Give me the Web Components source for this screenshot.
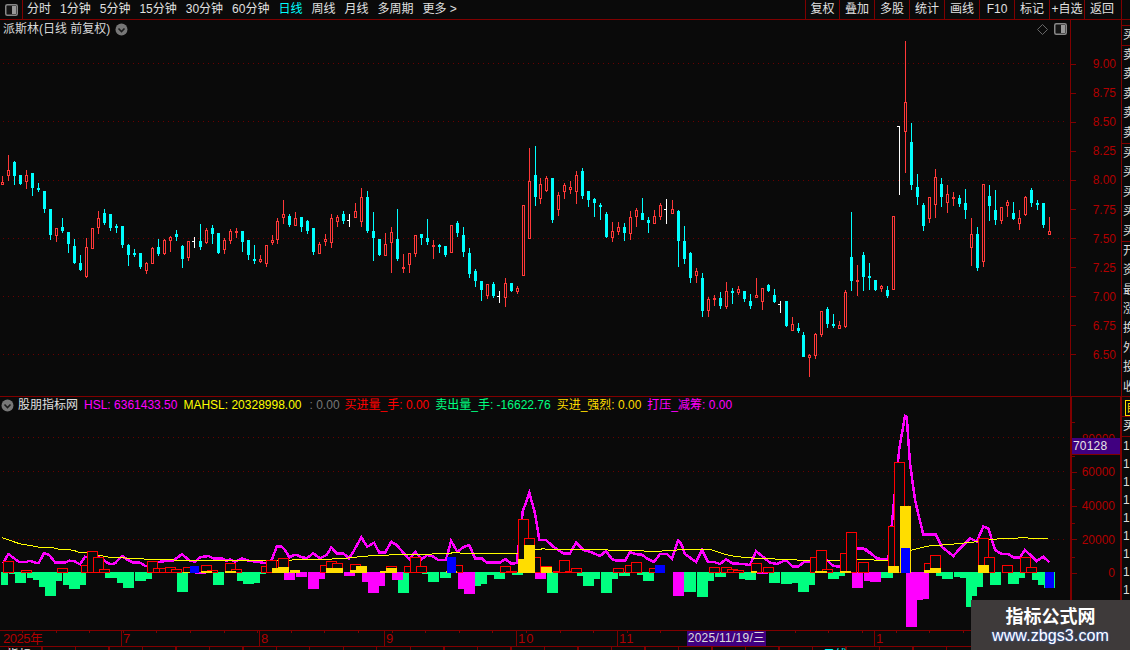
<!DOCTYPE html>
<html lang="zh">
<head>
<meta charset="utf-8">
<title>派斯林</title>
<style>
  html, body { margin: 0; padding: 0; background: #0a0a0a; overflow: hidden; }
</style>
</head>
<body>
<stock-terminal>
  <stock-toolbar style="grid-area: 1 / 1 / 2 / 4"></stock-toolbar>
  <price-panel style="grid-area: 2 / 1 / 3 / 2"></price-panel>
  <axis-scale style="grid-area: 2 / 2 / 3 / 3" labels="9.00,8.75,8.50,8.25,8.00,7.75,7.50,7.25,7.00,6.75,6.50" row="29.1" start="29.5" line="1"></axis-scale>
  <side-list style="grid-area: 2 / 3 / 3 / 4" top="5" rowh="19.4" sections="买|卖,卖,卖,卖,卖|买,买,买,买,买|开,资,最,涨,换,外,投,收"></side-list>
  <volume-panel style="grid-area: 3 / 1 / 4 / 2"></volume-panel>
  <axis-scale style="grid-area: 3 / 2 / 4 / 3" labels="80000,60000,40000,20000,0" row="33.7" start="24.85" line="2" minor>
    <cross-label>70128</cross-label>
  </axis-scale>
  <quote-column style="grid-area: 3 / 3 / 4 / 4"></quote-column>
  <time-axis style="grid-area: 4 / 1 / 5 / 4"></time-axis>
  <tab-strip style="grid-area: 5 / 1 / 6 / 4"></tab-strip>
  <site-mark>
    <span slot="name">指标公式网</span>
    <span slot="url">www.zbgs3.com</span>
  </site-mark>
</stock-terminal>

<script>
const LINE = '#800000';
const BG = '#0a0a0a';
const FONT = '"Liberation Sans", "Noto Sans CJK SC", sans-serif';

const chevronDot = `<svg width="13" height="13" viewBox="0 0 13 13"><circle cx="6.5" cy="6.5" r="6" fill="#777"/><path d="M3.5 5.5 L6.5 8.5 L9.5 5.5" fill="none" stroke="#1c1c1c" stroke-width="1.6"/></svg>`;
const panelIcon = `<svg width="13" height="12" viewBox="0 0 13 12"><rect x="0.75" y="0.75" width="11.5" height="10.5" rx="1.5" fill="#151515" stroke="#888" stroke-width="1.5"/><rect x="7" y="2" width="4" height="8" fill="#999"/></svg>`;

function dotted(ys) {
  return ys.map(y => `<line x1="3" x2="1068" y1="${y + 0.5}" y2="${y + 0.5}" stroke="#6a0000" stroke-width="1" stroke-dasharray="1 4"/>`).join('');
}

class StockTerminal extends HTMLElement {
  constructor() {
    super();
    this.attachShadow({ mode: 'open' });
    this.shadowRoot.innerHTML = `
      <style>
        :host { display: block; width: 1130px; height: 650px; position: relative; overflow: hidden;
          background: ${BG}; color: #ddd; font: 12px/16px ${FONT}; }
        .grid { display: grid; width: 100%; height: 100%;
          grid-template-columns: 1070px 51px 9px;
          grid-template-rows: 20px 376px 234px 17px 3px; }
      </style>
      <div class="grid"><slot></slot></div>`;
  }
}

class StockToolbar extends HTMLElement {
  constructor() {
    super();
    this.attachShadow({ mode: 'open' });
  }
  connectedCallback() {
    const periods = ['分时', '1分钟', '5分钟', '15分钟', '30分钟', '60分钟', '日线', '周线', '月线', '多周期', '更多 >'];
    const actions = ['复权', '叠加', '多股', '统计', '画线', 'F10', '标记', '+自选', '返回'];
    this.shadowRoot.innerHTML = `
      <style>
        :host { display: flex; height: 20px; box-sizing: border-box; border-bottom: 1px solid ${LINE};
          align-items: stretch; padding-right: 8px; line-height: 19px; color: #e0e0e0; }
        .switch { width: 23px; box-sizing: border-box; border-right: 1px solid ${LINE};
          display: flex; align-items: center; justify-content: center; padding-left: 1px; }
        svg { display: block; }
        .periods { display: flex; gap: 9px; padding-left: 4px; white-space: pre; }
        .on { color: #00ffff; }
        .actions { display: flex; margin-left: auto; }
        .actions span { width: 35px; box-sizing: border-box; border-left: 1px solid ${LINE}; text-align: center; white-space: nowrap; }
        .actions span:first-child { width: 34px; }
        .actions span:last-child { width: 38px; border-right: 1px solid ${LINE}; padding-right: 2px; }
      </style>
      <div class="switch">${panelIcon}</div>
      <div class="periods">${periods.map(p => `<span class="${p === '日线' ? 'on' : ''}">${p}</span>`).join('')}</div>
      <div class="actions">${actions.map(a => `<span>${a}</span>`).join('')}</div>`;
  }
}

// candles read off the chart: x, high, low, body top, body bottom, kind
const CANDLE_BLOCKS = [
  { ox: 0, oy: 150, rows: [
    [7,78,105,97,105,'r'],[25,15,93,60,78,'r'],[43,33,105,36,78,'c'],[61,75,105,75,102,'c'],[79,60,117,76,96,'r'],
    [97,69,138,69,114,'c'],[115,99,126,114,120,'c'],[133,123,189,123,177,'c'],[151,177,270,177,255,'c'],[169,234,276,234,258,'r'],
    [187,204,249,231,243,'c'],[205,246,309,246,282,'c'],[223,267,342,288,339,'c'],[241,315,363,339,360,'c'],[259,264,384,291,381,'r'],
    [277,234,297,234,297,'r'],[295,183,252,204,234,'r'],[313,177,225,189,219,'c'],[331,192,243,192,234,'c'],[349,222,249,228,234,'c'],
    [367,228,294,228,285,'c'],[385,282,348,285,315,'c'],[403,297,321,309,315,'c'],[421,309,357,309,351,'c'],[439,336,372,339,363,'r'],
    [457,291,342,294,342,'r'],[475,267,318,291,312,'c'],[493,267,315,270,312,'r'],[511,258,306,261,273,'r'],[529,240,273,252,261,'c'],
    [547,285,354,288,327,'c'],[565,273,333,273,324,'r'],[583,261,294,273,273,'w'],[601,222,300,273,291,'c'],[619,234,282,240,279,'r'],
    [637,225,282,234,252,'c'],[655,249,312,249,309,'c'],[673,264,312,270,300,'r'],[691,237,282,243,273,'r'],[709,234,264,243,249,'r'],
    [727,243,306,243,276,'c'],[745,270,330,270,315,'c'],[763,285,342,327,333,'c'],[781,315,339,327,336,'r'],[799,285,351,285,342,'r'],
    [817,255,285,270,279,'r'],[832,204,282,213,270,'r'],[850,150,222,192,204,'r'],[868,192,231,198,225,'c'],[886,186,228,204,228,'r']
  ]},
  { ox: 300, oy: 140, rows: [
    [4,231,276,231,261,'c'],[22,240,282,243,273,'c'],[40,264,345,264,336,'c'],[58,306,342,312,342,'r'],[76,282,318,297,306,'r'],
    [94,222,324,234,309,'r'],[112,225,261,231,246,'r'],[130,213,252,222,243,'c'],[148,222,261,240,240,'w'],[166,189,234,213,234,'r'],
    [184,144,261,171,246,'r'],[202,153,279,171,273,'c'],[220,216,363,273,294,'c'],[238,297,348,297,345,'c'],[256,279,348,312,348,'r'],
    [274,261,399,276,309,'r'],[292,207,363,297,357,'c'],[310,342,399,381,387,'r'],[328,339,399,339,375,'r'],[346,285,351,285,342,'r'],
    [364,282,315,282,294,'c'],[382,237,315,294,306,'c'],[400,300,357,315,321,'r'],[418,312,339,315,321,'c'],[436,318,351,318,345,'c'],
    [454,255,339,255,339,'r'],[472,243,291,249,279,'c'],[490,261,351,285,336,'c'],[508,324,414,339,402,'c'],[526,387,441,393,423,'c'],
    [544,423,483,423,450,'c'],[562,432,477,432,468,'r'],[580,426,474,432,468,'c'],[598,453,489,468,468,'w'],[616,414,501,429,474,'r'],
    [634,429,456,429,453,'c'],[652,438,462,444,456,'r'],[670,195,407,195,407,'r'],[688,24,297,123,297,'r'],[706,18,198,105,171,'c'],
    [722,114,192,132,177,'r'],[739,108,156,114,153,'r'],[757,114,249,114,240,'c'],[775,156,228,165,210,'r'],[793,129,177,135,156,'r'],
    [811,123,162,141,150,'r'],[829,93,192,105,156,'r'],[847,84,177,93,168,'c'],[865,153,201,153,180,'c'],[883,174,231,177,189,'c']
  ]},
  { ox: 600, oy: 190, rows: [
    [1,39,90,45,48,'c'],[19,66,144,72,141,'c'],[37,96,156,123,144,'r'],[55,96,135,111,126,'r'],[73,99,153,111,129,'c'],
    [91,63,150,81,132,'r'],[109,54,111,60,81,'r'],[127,24,90,69,90,'c'],[145,81,129,90,99,'c'],[163,60,102,78,102,'r'],
    [181,39,90,45,81,'r'],[199,27,102,58,58,'w'],[217,30,72,57,72,'r'],[235,60,231,63,153,'c'],[253,108,222,153,207,'c'],
    [271,186,279,189,264,'c'],[289,234,279,243,258,'r'],[307,249,381,264,363,'c'],[325,321,381,327,363,'r'],[343,315,348,324,330,'r'],
    [361,306,357,324,348,'c'],[379,276,357,303,351,'r'],[397,294,342,303,306,'c'],[415,288,315,297,309,'r'],[433,303,336,303,327,'c'],
    [451,312,357,333,348,'c'],[469,264,324,315,324,'r'],[487,294,360,294,336,'r'],[505,282,306,285,303,'c'],[523,297,339,315,336,'c'],
    [541,333,369,343,343,'w'],[559,333,411,333,408,'c'],[577,381,423,402,423,'r'],[595,399,429,414,423,'c'],[610,426,501,435,501,'c'],
    [628,492,561,495,504,'r'],[646,429,507,432,498,'r'],[664,363,441,363,435,'r'],[682,351,414,357,402,'c'],[700,372,414,402,405,'c'],
    [718,393,417,405,417,'r'],[736,300,414,306,411,'r'],[754,66,303,201,273,'c'],[772,225,318,270,276,'r'],[790,186,303,195,261,'c'],
    [808,219,300,258,264,'c'],[826,270,303,270,300,'c']
  ]},
  { ox: 870, oy: 270, rows: [[35,45,66,48,57,'r'],[52,48,84,60,78,'c']] },
  { ox: 890, oy: 216, rows: [[10,0,222,0,222,'r']] },
  { ox: 830, oy: 30, rows: [
    [208,288,495,288,288,'w'],[226,33,429,216,305,'r'],[244,279,480,336,465,'c'],[262,432,525,471,501,'c'],[280,519,603,525,588,'c'],
    [298,501,579,501,567,'r'],[316,417,564,441,525,'r'],[334,444,531,462,501,'c'],[352,465,549,492,519,'r'],[370,486,528,501,507,'r'],
    [388,495,531,504,522,'c'],[406,477,567,519,540,'c'],[424,564,708,612,654,'r'],[442,591,723,612,714,'c'],[460,462,711,462,696,'r'],
    [478,465,573,498,528,'c'],[496,480,585,540,570,'c'],[514,531,582,531,573,'r'],[532,510,561,516,528,'r'],[550,516,570,549,567,'c'],
    [568,540,600,564,582,'r'],[586,498,558,501,555,'r'],[604,474,531,480,519,'c'],[622,510,540,519,525,'c'],[640,519,594,519,585,'c'],
    [658,561,615,603,615,'r']
  ]}
];

class PricePanel extends HTMLElement {
  constructor() {
    super();
    this.attachShadow({ mode: 'open' });
  }
  connectedCallback() {
    this.shadowRoot.innerHTML = `
      <style>
        :host { display: flex; flex-direction: column; width: 1070px; height: 376px; }
        .head { height: 18px; display: flex; align-items: center; padding: 0 3px 0 3px; line-height: 18px; color: #d8d8d8; white-space: pre; }
        .head svg { display: block; }
        .dot { margin-left: 5px; }
        .tools { margin-left: auto; display: flex; align-items: center; gap: 6px; }
        .chart { display: block; }
      </style>
      <div class="head">
        <span>派斯林(日线 前复权)</span><span class="dot">${chevronDot}</span>
        <span class="tools">
          <svg width="11" height="11" viewBox="0 0 11 11"><path d="M5.5 0.5 L10.5 5.5 L5.5 10.5 L0.5 5.5 Z" fill="none" stroke="#666"/></svg>
          ${panelIcon}
        </span>
      </div>
      <svg class="chart" width="1070" height="358" viewBox="0 38 1070 358" shape-rendering="crispEdges">
        ${dotted([63, 121, 180, 238, 296, 354])}
        ${this.candles()}
      </svg>`;
  }

  candles() {
    let out = '';
    CANDLE_BLOCKS.forEach(block => {
      block.rows.forEach(([zx, hi, lo, top, bot, kind]) => {
        const px = Math.floor(block.ox + zx / 3);
        const yHi = Math.round(block.oy + hi / 3);
        const yLo = Math.round(block.oy + lo / 3);
        const yTop = Math.round(block.oy + top / 3);
        const yBot = Math.round(block.oy + bot / 3);
        const colour = kind === 'r' ? '#ff3838' : kind === 'c' ? '#00ffff' : '#ffffff';
        out += `<rect x="${px}" y="${yHi}" width="1" height="${yLo - yHi}" fill="${colour}"/>`;
        if (kind === 'w') {
          out += `<rect x="${px - 2}" y="${yTop}" width="2" height="1" fill="#fff"/>`;
        } else if (kind === 'c' || yBot - yTop < 3) {
          out += `<rect x="${px - 1}" y="${yTop}" width="3" height="${Math.max(yBot - yTop, 2)}" fill="${colour}"/>`;
        } else {
          out += `<rect x="${px - 0.5}" y="${yTop + 0.5}" width="2" height="${yBot - yTop - 1}" fill="${BG}" stroke="${colour}"/>`;
        }
      });
    });
    return out;
  }
}

// bars read off the chart in blocks: x1, x2, y
const VOL = [
  { ox: 0, oy: 530, red: [[9,42,94],[63,96,120],[171,204,114],[243,276,105],[261,294,63],[279,312,81],[297,330,117],[441,474,94],[459,492,114],[477,510,114],[495,528,111],[513,546,117],[549,582,111],[603,636,105],[621,654,120],[675,708,99],[693,726,117],[783,816,108],[799,832,90],[834,867,84]],
    green: [[3,24,165],[27,45,132],[45,78,159],[81,99,144],[99,117,150],[117,135,171],[135,168,198],[168,186,153],[189,207,165],[207,240,177],[240,258,165],[315,351,144],[351,369,159],[369,402,174],[405,438,153],[438,456,147],[531,564,186],[639,672,165],[711,729,153],[729,762,162],[762,780,159],[780,798,132]],
    pink: [[852,885,150],[888,900,141],[585,618,132]],
    gold: [[816,834,114],[834,867,111],[870,900,120],[549,570,125],[603,636,123],[675,708,124]],
    blue: [[570,597,108,129]] },
  { ox: 300, oy: 490, red: [[60,93,225],[78,111,213],[96,129,219],[150,183,222],[258,291,228],[312,345,228],[330,363,201],[348,381,228],[456,489,225],[600,633,228],[618,651,243],[654,687,87],[672,705,144],[690,723,201],[723,756,228],[759,792,243],[777,810,210],[795,828,243],[813,846,234]],
    green: [[294,327,309],[366,384,252],[384,417,276],[420,453,264],[525,543,288],[543,561,282],[561,582,255],[582,615,267],[636,669,255],[741,774,309],[831,849,258],[849,882,288],[882,900,267]],
    pink: [[0,21,261],[24,57,297],[57,75,267],[132,165,258],[186,204,276],[204,237,309],[237,255,288],[276,309,270],[474,492,297],[492,525,312],[705,738,267]],
    gold: [[78,129,234],[111,129,237],[150,168,240],[168,201,228],[240,258,243],[258,291,234],[654,672,207],[672,705,165],[723,756,231],[438,471,243]],
    blue: [[441,468,201,249]] },
  { ox: 600, oy: 500, red: [[39,72,204],[75,108,195],[93,126,186],[147,180,204],[327,360,201],[363,396,201],[381,414,207],[399,432,210],[453,486,189],[489,522,201],[630,663,171],[648,681,150],[666,699,207],[720,753,159],[738,771,96],[774,807,186]],
    green: [[3,36,279],[36,54,237],[57,90,228],[111,129,225],[129,162,243],[252,288,276],[291,324,291],[324,342,243],[345,378,231],[417,435,237],[435,468,240],[507,540,249],[543,576,252],[576,594,249],[594,627,276],[627,645,255],[684,717,237],[717,735,228]],
    pink: [[219,252,288],[471,504,222],[756,789,264],[792,810,243]],
    gold: [[453,471,213],[645,681,213],[720,753,213]],
    blue: [[165,195,195,219]] },
  { ox: 860, oy: 400, red: [[85,118,379],[103,135,187],[193,226,488],[211,243,466],[355,387,414],[373,405,472],[426,459,494],[481,513,472],[498,531,500]],
    green: [[63,99,534],[228,246,528],[246,279,537],[282,300,531],[300,318,534],[318,336,621],[336,351,588],[351,369,561],[390,423,555],[444,477,552],[477,495,534],[516,534,540],[534,552,555],[552,555,564],[582,585,563]],
    pink: [[30,63,546],[138,171,681],[171,189,600],[189,207,597]],
    gold: [[85,118,498],[120,153,318],[193,211,510],[211,243,504],[355,387,495]],
    blue: [[122,151,444,519],[555,582,516,563]] }
];

const HSL = [
  { ox: 0, oy: 530, pts: [9,100,15,90,25,72,40,83,57,96,78,96,90,92,105,98,116,99,132,70,148,75,165,97,195,98,207,92,222,93,240,103,255,80,264,82,295,80,310,90,330,103,345,100,366,78,384,90,400,98,420,98,438,109,460,100,480,95,520,91,546,73,570,92,585,95,600,82,625,78,640,85,665,85,680,92,690,88,705,95,726,85,745,92,770,95,800,100,815,90,830,50,845,50,855,60,868,82,885,74,900,78] },
  { ox: 300, oy: 490, pts: [0,200,20,205,40,190,60,205,80,195,94,172,110,190,130,190,147,205,160,185,184,142,202,170,222,158,238,188,255,188,274,155,290,165,310,188,328,208,346,186,365,208,382,195,400,200,415,210,438,210,453,153,472,185,490,172,508,165,525,205,545,205,560,218,600,218,616,207,635,222,650,218,668,65,688,8,705,70,718,150,738,150,760,170,790,190,810,190,828,158,850,180,870,185,900,198] },
  { ox: 600, oy: 500, pts: [0,168,18,153,36,178,48,182,75,182,90,156,105,162,125,164,145,178,162,186,180,162,200,162,216,176,234,122,243,130,255,162,288,186,306,150,324,186,342,186,360,192,378,178,396,190,430,192,450,195,468,154,486,168,510,188,530,192,558,180,578,200,595,200,612,186,630,186,648,186,680,180,700,198,720,200,738,165,772,146,790,146,810,160] },
  { ox: 860, oy: 400, pts: [15,445,50,475,85,480,118,145,135,48,140,50,150,190,165,300,190,404,228,404,245,440,280,468,300,445,330,415,350,425,370,380,385,385,405,450,425,462,445,462,460,472,480,472,495,450,530,483,550,470,568,487] }
];

const MA = [
  { ox: 0, oy: 530, pts: [6,22,24,27,45,35,60,40,90,45,110,49,130,52,160,52,180,57,210,58,225,61,240,67,260,67,300,75,320,78,330,82,375,82,380,85,430,85,435,88,520,88,525,91,780,91,900,88] },
  { ox: 300, oy: 490, pts: [0,208,85,206,140,203,175,199,210,196,280,193,425,190,462,187,555,190,650,190,705,178,730,175,750,178,900,178] },
  { ox: 600, oy: 500, pts: [0,148,120,151,175,154,190,151,240,148,335,148,350,153,370,160,390,165,410,168,445,172,515,175,570,178,680,181,720,181,770,178,810,178] },
  { ox: 860, oy: 400, pts: [0,477,85,480,150,450,200,437,290,430,355,423,415,415,490,412,565,415] }
];

class VolumePanel extends HTMLElement {
  constructor() {
    super();
    this.attachShadow({ mode: 'open' });
  }
  connectedCallback() {
    this.shadowRoot.innerHTML = `
      <style>
        :host { display: flex; flex-direction: column; width: 1070px; height: 234px; box-sizing: border-box; border-top: 1px solid ${LINE}; }
        .head { height: 16px; display: flex; align-items: center; gap: 6px; padding-left: 1px; white-space: pre; line-height: 16px; }
        .head svg { display: block; }
        .name { color: #e0e0e0; margin-left: -2px; }
        .chart { display: block; }
      </style>
      <div class="head">
        ${chevronDot}
        <span class="name">股朋指标网</span>
        <span style="color:#ff00ff">HSL: 6361433.50</span>
        <span style="color:#ffff00">MAHSL: 20328998.00</span>
        <span style="color:#777;margin-left:2px">: 0.00</span>
        <span style="color:#ff0000;margin-left:-1px">买进量_手: 0.00</span>
        <span style="color:#00ff80">卖出量_手: -16622.76</span>
        <span style="color:#ffdd00">买进_强烈: 0.00</span>
        <span style="color:#ff00ff">打压_减筹: 0.00</span>
      </div>
      <svg class="chart" width="1070" height="217" viewBox="0 413 1070 217" shape-rendering="crispEdges">
        ${dotted([437, 471, 505, 539])}
        ${this.drawLine(HSL, '#ff00ff', 2.5, 0)}
        ${this.drawLine(MA, '#ffff00', 1, 0.5)}
        ${this.drawBars()}
      </svg>`;
  }

  drawLine(blocks, colour, width, shift) {
    const pts = [];
    blocks.forEach(b => {
      for (let i = 0; i < b.pts.length; i += 2) {
        pts.push(`${(b.ox + b.pts[i] / 3).toFixed(1)},${(b.oy + b.pts[i + 1] / 3 + shift).toFixed(1)}`);
      }
    });
    return `<polyline points="${pts.join(' ')}" fill="none" stroke="${colour}" stroke-width="${width}"/>`;
  }

  drawBars() {
    const base = 572;
    const px = (b, v) => Math.round(b.ox + v / 3);
    const py = (b, v) => Math.round(b.oy + v / 3);
    let below = '', reds = [], gold = '', blue = '';
    VOL.forEach(b => {
      b.green.forEach(r => { below += `<rect x="${px(b, r[0])}" y="${base}" width="${px(b, r[1]) - px(b, r[0])}" height="${py(b, r[2]) - base}" fill="#00ff80"/>`; });
      b.pink.forEach(r => { below += `<rect x="${px(b, r[0])}" y="${base}" width="${px(b, r[1]) - px(b, r[0])}" height="${py(b, r[2]) - base}" fill="#ff00ff"/>`; });
      b.red.forEach(r => { reds.push([px(b, r[0]), px(b, r[1]), py(b, r[2])]); });
      b.gold.forEach(r => { gold += `<rect x="${px(b, r[0])}" y="${py(b, r[2])}" width="${px(b, r[1]) - px(b, r[0])}" height="${base + 1 - py(b, r[2])}" fill="#ffdd00"/>`; });
      b.blue.forEach(r => { blue += `<rect x="${px(b, r[0])}" y="${py(b, r[2])}" width="${px(b, r[1]) - px(b, r[0])}" height="${py(b, r[3]) - py(b, r[2])}" fill="#0000ff"/>`; });
    });
    reds.sort((a, c) => a[0] - c[0]);
    const redOut = reds.map(r => `<rect x="${r[0] + 0.5}" y="${r[2] + 0.5}" width="${r[1] - r[0] - 1}" height="${base - r[2]}" fill="${BG}" stroke="#ff0000"/>`).join('');
    return below + redOut + gold + blue;
  }
}

class AxisScale extends HTMLElement {
  constructor() {
    super();
    this.attachShadow({ mode: 'open' });
  }
  connectedCallback() {
    const labels = this.getAttribute('labels').split(',');
    const row = this.getAttribute('row');
    const start = this.getAttribute('start');
    const line = this.getAttribute('line');
    const minor = this.hasAttribute('minor');
    this.shadowRoot.innerHTML = `
      <style>
        :host { display: flex; flex-direction: column; position: relative; box-sizing: border-box;
          border-left: ${line}px solid ${LINE}; padding-top: ${start}px; color: #b00000; ${line === '2' ? `border-top: 1px solid ${LINE}; border-right: 1px solid ${LINE};` : ''} }
        .row { height: ${row}px; flex: none; display: flex; align-items: center; justify-content: space-between; padding-right: 5px;
          ${minor ? `background: linear-gradient(${LINE}, ${LINE}) no-repeat 0 0 / 3px 1px;` : ''} }
        i { display: block; width: 5px; height: 1px; background: ${LINE}; }
      </style>
      ${labels.map(l => `<div class="row"><i></i><span>${l}</span></div>`).join('')}
      <slot></slot>`;
  }
}

class CrossLabel extends HTMLElement {
  constructor() {
    super();
    this.attachShadow({ mode: 'open' });
    this.shadowRoot.innerHTML = `
      <style>
        :host { position: absolute; left: 0; right: 0; top: 41px; height: 16px; background: #400080; color: #e6e6e6;
          line-height: 16px; padding-left: 1px; letter-spacing: 0.2px; border-bottom: 1px solid ${LINE}; }
      </style>
      <slot></slot>`;
  }
}

class SideList extends HTMLElement {
  constructor() {
    super();
    this.attachShadow({ mode: 'open' });
  }
  connectedCallback() {
    const sections = this.getAttribute('sections').split('|');
    const rowh = this.getAttribute('rowh');
    this.shadowRoot.innerHTML = `
      <style>
        :host { display: block; box-sizing: border-box; border-left: 1px solid ${LINE}; overflow: hidden; padding-top: ${this.getAttribute('top')}px; color: #ddd; }
        section { border-top: 1px solid ${LINE}; padding-left: 1px; }
        section:first-of-type div { height: 19px; }
        div { height: ${rowh}px; line-height: ${rowh}px; white-space: nowrap; }
      </style>
      ${sections.map(s => `<section>${s.split(',').map(c => `<div>${c}</div>`).join('')}</section>`).join('')}`;
  }
}

class QuoteColumn extends HTMLElement {
  constructor() {
    super();
    this.attachShadow({ mode: 'open' });
  }
  connectedCallback() {
    const ones = Array.from({ length: 11 }, () => '<div class="n">1</div>').join('');
    this.shadowRoot.innerHTML = `
      <style>
        :host { display: block; box-sizing: border-box; border-left: 1px solid ${LINE}; border-top: 1px solid ${LINE}; overflow: hidden; line-height: 18px; }
        .own { height: 20px; border-bottom: 1px solid ${LINE}; padding: 3px 0 0 3px; box-sizing: border-box; }
        .own span { display: block; height: 16px; line-height: 15px; box-sizing: border-box; border: 1px solid #ffdd00; border-right: 0; color: #ffdd00; white-space: nowrap; }
        .buy { height: 19px; border-bottom: 1px solid ${LINE}; padding-left: 1px; color: #eee; white-space: nowrap; }
        .n { height: 18px; padding-left: 1px; color: #ddd; }
      </style>
      <div class="own"><span>自</span></div>
      <div class="buy">买</div>
      ${ones}`;
  }
}

class TimeAxis extends HTMLElement {
  constructor() {
    super();
    this.attachShadow({ mode: 'open' });
  }
  connectedCallback() {
    const cells = [[121, '2025年'], [138, '7'], [125, '8'], [132, '9'], [101, '10'], [257, '11'], [247, '1']];
    this.shadowRoot.innerHTML = `
      <style>
        :host { display: flex; position: relative; box-sizing: border-box; border-top: 1px solid ${LINE}; border-bottom: 1px solid ${LINE};
          color: #b00000; line-height: 16px; font-size: 13px;
          background: repeating-linear-gradient(90deg, ${LINE} 0 1px, transparent 1px 33.6px) no-repeat 22px 0 / 100% 2px; }
        span { flex: none; box-sizing: border-box; padding-left: 1px; border-left: 1px solid ${LINE}; letter-spacing: 1px; }
        span:first-of-type { border-left: 0; padding-left: 3px; letter-spacing: -0.5px; }
        .now { position: absolute; left: 687px; top: 0; width: 79px; height: 15px; background: #400080; color: #ddd; font-size: 12px;
          line-height: 15px; text-align: center; white-space: nowrap; letter-spacing: 0.25px; }
      </style>
      ${cells.map(c => `<span style="width:${c[0]}px">${c[1]}</span>`).join('')}
      <div class="now">2025/11/19/三</div>`;
  }
}

class TabStrip extends HTMLElement {
  constructor() {
    super();
    this.attachShadow({ mode: 'open' });
    this.shadowRoot.innerHTML = `
      <style>
        :host { display: flex; overflow: hidden; height: 3px; line-height: 16px; white-space: nowrap; color: #eee;
          background: repeating-linear-gradient(90deg, ${LINE} 0 1px, transparent 1px 33.5px) 8px 0; }
        span { display: block; padding-left: 7px; }
        .c { color: #00ffff; margin-left: 785px; }
      </style>
      <span>指标</span><span class="c">日线</span>`;
  }
}

class SiteMark extends HTMLElement {
  constructor() {
    super();
    this.attachShadow({ mode: 'open' });
    this.shadowRoot.innerHTML = `
      <style>
        :host { position: absolute; right: 0; bottom: 0; width: 159px; height: 50px; background: #3e3a3a;
          display: flex; flex-direction: column; align-items: center; padding: 5px 0 0 0; box-sizing: border-box; }
        .name { font: bold 18px/21px "Noto Sans CJK SC", sans-serif; color: #fff; }
        .url { font: 16px/20px "Liberation Sans", sans-serif; color: #fff; text-shadow: 0 0 2px #3a78ff; letter-spacing: 0.1px; }
      </style>
      <div class="name"><slot name="name"></slot></div>
      <div class="url"><slot name="url"></slot></div>`;
  }
}

customElements.define('stock-terminal', StockTerminal);
customElements.define('stock-toolbar', StockToolbar);
customElements.define('price-panel', PricePanel);
customElements.define('volume-panel', VolumePanel);
customElements.define('axis-scale', AxisScale);
customElements.define('cross-label', CrossLabel);
customElements.define('side-list', SideList);
customElements.define('quote-column', QuoteColumn);
customElements.define('time-axis', TimeAxis);
customElements.define('tab-strip', TabStrip);
customElements.define('site-mark', SiteMark);
</script>
</body>
</html>
